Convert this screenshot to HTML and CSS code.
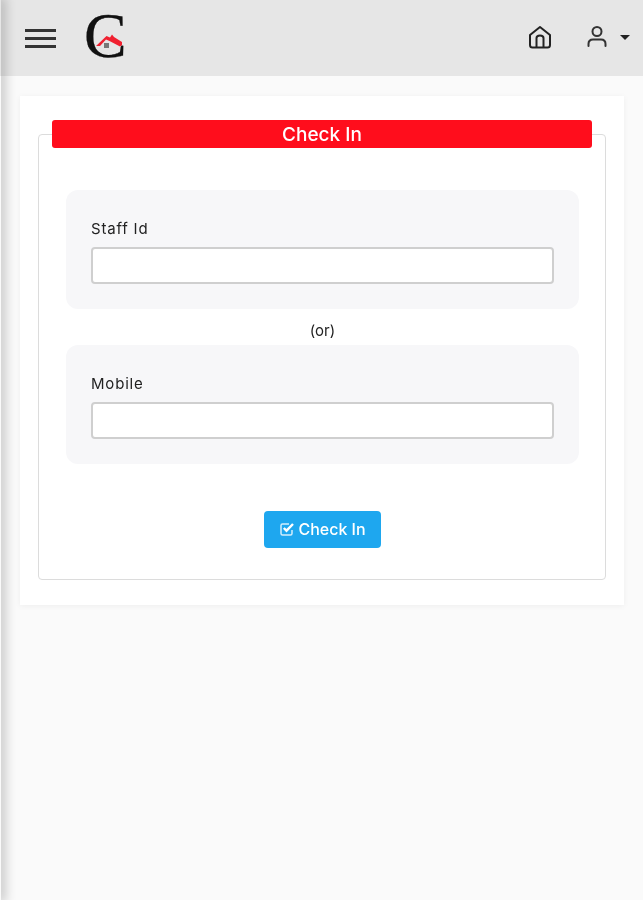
FILE: index.html
```html
<!DOCTYPE html>
<html lang="en">
<head>
<meta charset="utf-8">
<title>Check In</title>
<link rel="stylesheet" href="styles.css">
</head>
<body>
<div class="edge-shadow"></div>
<header class="topbar">
  <div class="topbar-left">
    <button class="menu-btn" aria-label="Menu"><span></span><span></span><span></span></button>
    <div class="logo">
      <span class="logo-c">C</span>
      <svg class="logo-roof" width="28" height="18" viewBox="0 0 28 18">
        <path d="M1 13 L11.500 3 L15 4.500 L17 1.500 L19 4 L27 9 L27 12 L25 13.500 L14.500 8 L11 6.500 L5 13 Z" fill="#f02030"/>
        <rect x="9" y="10" width="5" height="5" fill="#777"/>
      </svg>
    </div>
  </div>
  <div class="topbar-right">
    <svg class="icon-home" width="26" height="26" viewBox="0 0 26 26" fill="none" stroke="#222" stroke-width="2" stroke-linejoin="round">
      <path d="M3 11 L13 3 L23 11 V21 Q23 23.500 20.500 23.500 H5.500 Q3 23.500 3 21 Z"/>
      <path d="M9.500 23.500 V14 Q9.500 11.500 13 11.500 Q16.500 11.500 16.500 14 V23.500"/>
    </svg>
    <div class="user">
      <svg width="24" height="24" viewBox="0 0 24 24" fill="none" stroke="#333" stroke-width="2" stroke-linecap="round">
        <circle cx="11" cy="6.500" r="4.500"/>
        <path d="M2.500 21 V19 Q2.500 14.500 7 14.500 H15 Q19.500 14.500 19.500 19 V21"/>
      </svg>
      <span class="caret"></span>
    </div>
  </div>
</header>
<main class="content">
  <section class="card">
    <fieldset class="box">
      <legend class="box-title">Check In</legend>
      <div class="panel">
        <label class="field-label" for="staff">Staff Id</label>
        <input class="field-input" id="staff" type="text">
      </div>
      <p class="or">(or)</p>
      <div class="panel">
        <label class="field-label" for="mobile">Mobile</label>
        <input class="field-input" id="mobile" type="text">
      </div>
      <div class="actions">
        <button class="submit" type="button">
          <svg width="16" height="16" viewBox="0 0 16 16" fill="none" stroke="#fff">
            <path d="M13 9 V12.500 Q13 14 11.500 14 H3.500 Q2 14 2 12.500 V4.500 Q2 3 3.500 3 H10" stroke-width="1.500" opacity=".8"/>
            <path d="M4.800 7 L7.500 9.700 L14 3" stroke-width="2.400"/>
          </svg>
          Check In
        </button>
      </div>
    </fieldset>
  </section>
</main>
</body>
</html>
```
FILE: styles.css
```css
* { box-sizing: border-box; }
html, body { height: 100%; }
body {
  margin: 0;
  background: #fafafa;
  font-family: "Inter", "Roboto", "Liberation Sans", sans-serif;
  color: #222;
  overflow: hidden;
  filter: blur(.45px);
}
.edge-shadow {
  position: absolute;
  left: 0;
  top: 0;
  bottom: 0;
  width: 1px;
  box-shadow: 0 0 12px 3px rgba(0,0,0,.3);
  z-index: 2;
}
.topbar {
  height: 76px;
  background: #e6e6e6;
  display: flex;
  justify-content: space-between;
  align-items: center;
  padding: 0 11px 0 25px;
}
.topbar-left { display: flex; align-items: center; gap: 29px; }
.menu-btn {
  width: 31px;
  padding: 0;
  border: 0;
  background: none;
  display: flex;
  flex-direction: column;
  gap: 5px;
}
.menu-btn span { display: block; height: 3px; background: #333; }
.logo { position: relative; width: 44px; height: 50px; margin-top: -4px; margin-left: -1px; }
.logo-c {
  display: block;
  font: 400 64px/50px "Liberation Serif", serif;
  color: #111;
  -webkit-text-stroke: .3px #111;
}
.logo-roof { position: absolute; left: 11px; top: 22px; }
.topbar-right { display: flex; align-items: center; gap: 33px; margin-top: -2px; }
.user { display: flex; align-items: center; gap: 10px; width: 46px; }
.caret {
  width: 0;
  height: 0;
  border-left: 5px solid transparent;
  border-right: 5px solid transparent;
  border-top: 5px solid #222;
}
.content { padding: 20px 19px 0 20px; }
.card {
  background: #fff;
  box-shadow: 0 1px 6px rgba(0,0,0,.05);
  padding: 24px 18px;
  height: 509px;
}
.box {
  margin: 0;
  min-width: 0;
  height: 460px;
  padding: 0 26px 0 27px;
  border: 1px solid #dcdcdc;
  border-radius: 4px;
}
.box-title {
  display: block;
  width: 540px;
  height: 28px;
  margin: 0 0 0 -14px;
  padding: 0;
  background: #ff0d1c;
  border-radius: 3px;
  color: #fff;
  font-size: 19px;
  font-weight: 500;
  line-height: 29px;
  text-align: center;
}
.panel {
  background: #f7f7f9;
  border-radius: 12px;
  padding: 29px 25px 25px;
}
.box-title + .panel { margin-top: 42px; }
.field-label {
  display: block;
  font-size: 15px;
  line-height: 19px;
  letter-spacing: .8px;
  margin-bottom: 9px;
}
.field-input {
  display: block;
  width: 100%;
  height: 37px;
  border: 2px solid #cfcfcf;
  border-radius: 4px;
  background: #fff;
}
.or {
  margin: 0;
  height: 36px;
  font-size: 15px;
  line-height: 44px;
  text-align: center;
}
.actions { display: flex; justify-content: center; margin-top: 47px; }
.submit {
  width: 117px;
  height: 37px;
  display: flex;
  align-items: center;
  justify-content: center;
  gap: 3px;
  border: 0;
  border-radius: 4px;
  padding: 0 0 2px;
  background: #1ea7ef;
  color: #fff;
  font: 500 16px "Inter", "Roboto", sans-serif;
}
```
